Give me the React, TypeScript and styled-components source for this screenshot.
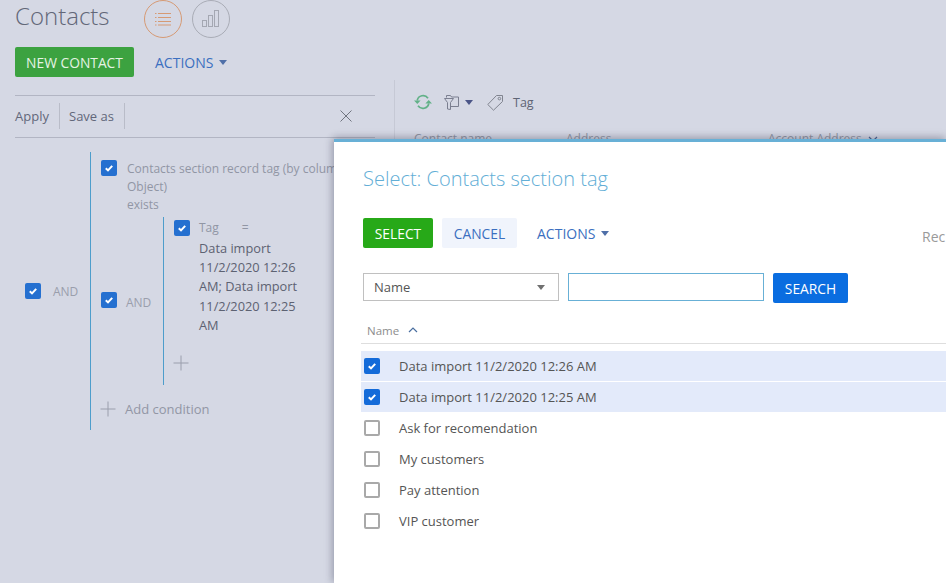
import React from "react";
import styled, { createGlobalStyle } from "styled-components";

const Global = createGlobalStyle`
  html, body { margin: 0; padding: 0; background: #d5d8e4; }
  body { font-family: "Open Sans", "Liberation Sans", sans-serif; }
  * { box-sizing: border-box; }
`;

const Page = styled.div`
  position: relative;
  width: 946px;
  height: 583px;
  overflow: hidden;
  background: #d5d8e4;
  color: #555a6a;
`;

const Header = styled.div`
  display: flex;
  align-items: flex-start;
  height: 47px;
  padding-left: 15px;
`;
const Title = styled.div`
  width: 129px;
  font-size: 24px;
  font-weight: 300;
  line-height: 31px;
  color: #626778;
`;
const RoundIcon = styled.div<{ $active?: boolean }>`
  width: 38px;
  height: 38px;
  margin-right: 10px;
  border-radius: 50%;
  border: 1px solid ${(p) => (p.$active ? "#d69a74" : "#a9acb6")};
  display: flex;
  align-items: center;
  justify-content: center;
`;

const Toolbar = styled.div`
  display: flex;
  align-items: center;
  height: 30px;
  padding-left: 15px;
`;
const SolidButton = styled.div<{ $bg: string; $w: number; $fg?: string; $ml?: number }>`
  width: ${(p) => p.$w}px;
  height: 30px;
  margin-left: ${(p) => p.$ml || 0}px;
  border-radius: 2px;
  background: ${(p) => p.$bg};
  color: ${(p) => p.$fg || "#fff"};
  font-size: 13.8px;
  line-height: 32px;
  text-align: center;
  flex: none;
`;
const ActionLink = styled.div<{ $ml: number }>`
  margin-left: ${(p) => p.$ml}px;
  display: flex;
  align-items: center;
  gap: 6px;
  font-size: 14px;
  color: #3b6fc0;
`;
const Caret = styled.span<{ $c?: string }>`
  width: 0;
  height: 0;
  border-left: 4.5px solid transparent;
  border-right: 4.5px solid transparent;
  border-top: 5px solid ${(p) => p.$c || "#4f6fa8"};
`;

const Columns = styled.div`
  display: flex;
  height: 506px;
`;
const LeftPane = styled.div`
  width: 395px;
  flex: none;
  padding: 15px 19px 0 15px;
  border-right: 1px solid #c6c9d5;
  margin-top: 3px;
  height: 500px;
`;
const FilterBar = styled.div`
  display: flex;
  align-items: center;
  height: 43px;
  padding-bottom: 1px;
  border-top: 1px solid #b2b5c3;
  border-bottom: 1px solid #b2b5c3;
  font-size: 13px;
  color: #62677a;
`;
const FilterItem = styled.div<{ $w: number }>`
  width: ${(p) => p.$w}px;
  height: 26px;
  line-height: 26px;
  border-right: 1px solid #b9bcc8;
`;
const FilterItemInset = styled(FilterItem)`
  padding-left: 9px;
`;
const CloseWrap = styled.div`
  margin-left: auto;
  margin-right: 23px;
  display: flex;
`;

const Tree = styled.div`
  display: flex;
  align-items: center;
  padding: 14px 0 0 10px;
`;
const Check = styled.div<{ $on?: boolean; $bg?: string }>`
  width: 16px;
  height: 16px;
  flex: none;
  border-radius: 2px;
  background: ${(p) => (p.$on ? p.$bg || "#2570d0" : "#fff")};
  border: ${(p) => (p.$on ? "none" : "2px solid #a9a9a9")};
  display: flex;
  align-items: center;
  justify-content: center;
`;
const RaisedCheck = styled(Check)`
  margin-bottom: 3px;
`;
const AndLabel = styled.div<{ $w: number; $ml: number; $pt?: number }>`
  width: ${(p) => p.$w}px;
  margin-left: ${(p) => p.$ml}px;
  padding-top: ${(p) => p.$pt || 0}px;
  flex: none;
  font-size: 12px;
  color: #9a9eac;
`;
const OuterGroup = styled.div`
  border-left: 1px solid #4d9dcb;
  height: 278px;
  padding: 8px 0 0 10px;
  width: 260px;
  flex: none;
`;
const CondRow = styled.div`
  display: flex;
  gap: 10px;
`;
const CondText = styled.div`
  font-size: 12px;
  line-height: 18px;
  margin-bottom: -1px;
  color: #9196a4;
  white-space: nowrap;
`;
const NestedRow = styled.div`
  display: flex;
  align-items: center;
  margin-top: 4px;
`;
const InnerGroup = styled.div`
  border-left: 1px solid #4d9dcb;
  height: 168px;
  padding: 3px 0 0 10px;
`;
const TagBlock = styled.div`
  width: 130px;
  margin-left: -1px;
`;
const TagHead = styled.div`
  display: flex;
  gap: 23px;
  font-size: 12px;
  line-height: 16px;
  color: #9196a4;
`;
const TagValue = styled.div`
  margin-top: 3px;
  font-size: 12.8px;
  line-height: 19.2px;
  color: #5d6272;
`;
const PlusRow = styled.div<{ $mt: number; $ml: number }>`
  margin-top: ${(p) => p.$mt}px;
  margin-left: ${(p) => p.$ml}px;
  display: flex;
  align-items: center;
  gap: 9px;
  font-size: 13px;
  color: #9296a4;
`;

const RightPane = styled.div`
  flex: 1;
  padding: 13px 0 0 19px;
`;
const GridTools = styled.div`
  display: flex;
  align-items: center;
  height: 24px;
  font-size: 12.5px;
  color: #5f6474;
`;
const ToolSlot = styled.div<{ $ml: number }>`
  margin-left: ${(p) => p.$ml}px;
  display: flex;
  align-items: center;
  gap: 6px;
`;
const ColumnHeads = styled.div`
  display: flex;
  margin-top: 16px;
  font-size: 12px;
  color: #8f93a1;
`;
const ColumnHead = styled.div<{ $w: number }>`
  width: ${(p) => p.$w}px;
  display: flex;
  align-items: center;
  gap: 6px;
  white-space: nowrap;
`;

const Modal = styled.div`
  position: absolute;
  left: 334px;
  top: 139px;
  width: 612px;
  height: 444px;
  background: #fff;
  border-top: 3px solid #68b0d6;
  box-shadow: -3px 0 7px rgba(60, 65, 85, 0.22), 0 -3px 7px rgba(60, 65, 85, 0.22);
  padding: 23px 0 0 29px;
`;
const ModalTitle = styled.div`
  font-size: 20px;
  font-weight: 300;
  line-height: 28px;
  color: #62aed6;
`;
const ModalButtons = styled.div`
  display: flex;
  align-items: center;
  margin-top: 25px;
  height: 30px;
`;
const RecLabel = styled.div`
  position: absolute;
  left: 588px;
  top: 85px;
  font-size: 14px;
  color: #9a9a9a;
`;
const SearchRow = styled.div`
  display: flex;
  align-items: flex-start;
  margin-top: 25px;
`;
const SelectBox = styled.div`
  width: 196px;
  height: 28px;
  border: 1px solid #c0c0c0;
  display: flex;
  align-items: center;
  justify-content: space-between;
  padding: 0 13px 0 10px;
  font-size: 13px;
  color: #555;
`;
const SearchInput = styled.div`
  width: 196px;
  height: 28px;
  margin: 0 9px;
  border: 1px solid #68b0d6;
`;
const TableHead = styled.div`
  display: flex;
  align-items: center;
  gap: 9px;
  margin: 15px 0 0 -2px;
  padding: 0 0 1px 6px;
  height: 26px;
  width: 585px;
  border-bottom: 1px solid #dedede;
  font-size: 11.5px;
  color: #8d8d8d;
`;
const Rows = styled.div`
  margin: 7px 0 0 -2px;
  display: flex;
  flex-direction: column;
  gap: 1px;
`;
const Row = styled.div<{ $on?: boolean }>`
  display: flex;
  align-items: center;
  height: 30px;
  width: 585px;
  padding-left: 3px;
  background: ${(p) => (p.$on ? "#e3eafa" : "#fff")};
  font-size: 13px;
  color: #555;
`;
const RowText = styled.div`
  margin-left: 19px;
`;

const Tick = () => (
  <svg width="10" height="10" viewBox="0 0 10 10" fill="none">
    <path d="M1.8 5.2 L4 7.4 L8.2 2.8" stroke="#fff" strokeWidth="2" />
  </svg>
);
const Box = ({ on, bg }: { on?: boolean; bg?: string }) => (
  <Check $on={on} $bg={bg}>{on && <Tick />}</Check>
);

const Plus = () => (
  <svg width="16" height="16" viewBox="0 0 16 16" fill="none">
    <path d="M8 .5V15.5M.5 8H15.5" stroke="#9a9eac" strokeWidth="1" />
  </svg>
);

const rows = [
  { t: "Data import 11/2/2020 12:26 AM", on: true },
  { t: "Data import 11/2/2020 12:25 AM", on: true },
  { t: "Ask for recomendation" },
  { t: "My customers" },
  { t: "Pay attention" },
  { t: "VIP customer" },
];

export default function App() {
  return (
    <Page>
      <Global />
      <Header>
        <Title>Contacts</Title>
        <RoundIcon $active>
          <svg width="16" height="14" viewBox="0 0 16 14" fill="none" stroke="#d69a74" strokeWidth="1">
            <path d="M0 1.5H1.5M0 5.5H1.5M0 9.5H1.5M0 13H1.5" />
            <path d="M3 1.5H16M3 5.5H16M3 9.5H16M3 13H16" />
          </svg>
        </RoundIcon>
        <RoundIcon>
          <svg width="18" height="18" viewBox="0 0 18 18" fill="none" stroke="#a4a7b2" strokeWidth="1">
            <rect x=".5" y="10.5" width="4" height="6" />
            <rect x="6.5" y="5.5" width="4" height="11" />
            <rect x="12.5" y=".5" width="4" height="16" />
          </svg>
        </RoundIcon>
      </Header>
      <Toolbar>
        <SolidButton $bg="#3ca240" $w={119} $fg="#e6f3e4">NEW CONTACT</SolidButton>
        <ActionLink $ml={21}>ACTIONS <Caret /></ActionLink>
      </Toolbar>
      <Columns>
        <LeftPane>
          <FilterBar>
            <FilterItem $w={45}>Apply</FilterItem>
            <FilterItemInset $w={65}>Save as</FilterItemInset>
            <CloseWrap>
              <svg width="12" height="12" viewBox="0 0 12 12" fill="none" stroke="#70747f" strokeWidth="1">
                <path d="M.5 .5L11.5 11.5M11.5 .5L.5 11.5" />
              </svg>
            </CloseWrap>
          </FilterBar>
          <Tree>
            <Box on />
            <AndLabel $w={37} $ml={12}>AND</AndLabel>
            <OuterGroup>
              <CondRow>
                <Box on />
                <CondText>
                  Contacts section record tag (by column
                  <br />
                  Object)
                  <br />
                  exists
                </CondText>
              </CondRow>
              <NestedRow>
                <RaisedCheck $on><Tick /></RaisedCheck>
                <AndLabel $w={37} $ml={9} $pt={3}>AND</AndLabel>
                <InnerGroup>
                  <CondRow>
                    <Box on />
                    <TagBlock>
                      <TagHead>
                        <span>Tag</span>
                        <span>=</span>
                      </TagHead>
                      <TagValue>
                        Data import
                        <br />
                        11/2/2020 12:26
                        <br />
                        AM; Data import
                        <br />
                        11/2/2020 12:25
                        <br />
                        AM
                      </TagValue>
                    </TagBlock>
                  </CondRow>
                  <PlusRow $mt={20} $ml={-1}><Plus /></PlusRow>
                </InnerGroup>
              </NestedRow>
              <PlusRow $mt={15} $ml={-1}><Plus />Add condition</PlusRow>
            </OuterGroup>
          </Tree>
        </LeftPane>
        <RightPane>
          <GridTools>
            <svg width="18" height="16" viewBox="0 0 18 16" fill="none" stroke="#62b188" strokeWidth="1.7">
              <path d="M3.2 6.5A6 6 0 0 1 14 4.2M14.8 9.5A6 6 0 0 1 4 11.8" />
              <path d="M0 6.4L3.3 10 6.6 6.4Z M11.4 9.6L14.7 6 18 9.6Z" fill="#62b188" stroke="none" />
            </svg>
            <ToolSlot $ml={12}>
              <svg width="15" height="17" viewBox="0 0 15 17" fill="none" stroke="#7b7f90" strokeWidth="1">
                <path d="M2.5 3.5V1.5H6.5L7.5 3H14.5V12.5H7" />
                <path d="M.5 4.5H9.5L6.5 8.5V15.5L3.5 15V8.5Z" />
              </svg>
              <Caret $c="#4b5587" />
            </ToolSlot>
            <ToolSlot $ml={14}>
              <svg width="17" height="17" viewBox="0 0 17 17" fill="none" stroke="#80848f" strokeWidth="1">
                <path d="M.8 10.5L9.5 1.5H15.5V7.5L6.5 16.2Z" />
                <circle cx="12.4" cy="4.6" r="1.3" />
              </svg>
            </ToolSlot>
            <ToolSlot $ml={9}>Tag</ToolSlot>
          </GridTools>
          <ColumnHeads>
            <ColumnHead $w={152}>Contact name</ColumnHead>
            <ColumnHead $w={202}>Address</ColumnHead>
            <ColumnHead $w={140}>
              Account Address
              <svg width="10" height="6" viewBox="0 0 10 6" fill="none" stroke="#4a5f90" strokeWidth="1.2">
                <path d="M1 1L5 5L9 1" />
              </svg>
            </ColumnHead>
          </ColumnHeads>
        </RightPane>
      </Columns>
      <Modal>
        <ModalTitle>Select: Contacts section tag</ModalTitle>
        <ModalButtons>
          <SolidButton $bg="#27a918" $w={70}>SELECT</SolidButton>
          <SolidButton $bg="#f0f4fc" $w={75} $fg="#3b6fc0" $ml={9}>CANCEL</SolidButton>
          <ActionLink $ml={20}>ACTIONS <Caret /></ActionLink>
        </ModalButtons>
        <RecLabel>Rec</RecLabel>
        <SearchRow>
          <SelectBox>
            Name
            <Caret $c="#707070" />
          </SelectBox>
          <SearchInput />
          <SolidButton $bg="#0a6de0" $w={75}>SEARCH</SolidButton>
        </SearchRow>
        <TableHead>
          Name
          <svg width="10" height="6" viewBox="0 0 10 6" fill="none" stroke="#4a6fa0" strokeWidth="1.2">
            <path d="M1 5L5 1L9 5" />
          </svg>
        </TableHead>
        <Rows>
          {rows.map((r) => (
            <Row key={r.t} $on={r.on}>
              <Box on={r.on} bg="#146bd9" />
              <RowText>{r.t}</RowText>
            </Row>
          ))}
        </Rows>
      </Modal>
    </Page>
  );
}
